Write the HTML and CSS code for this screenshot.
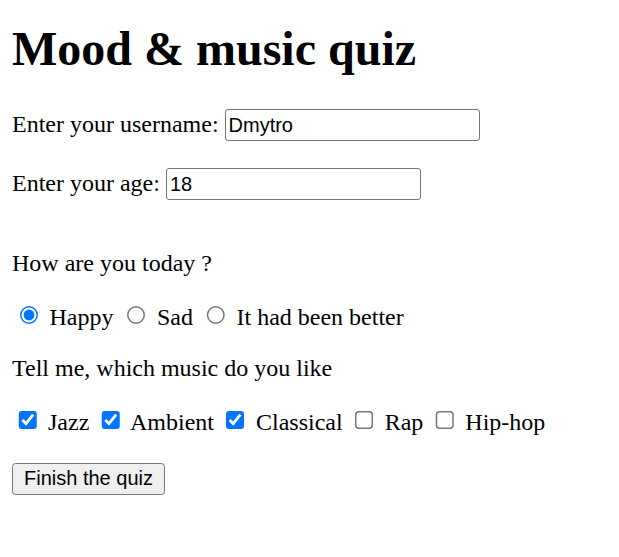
FILE: index.html
```html
<!DOCTYPE html>
<html>
<head>
<meta charset="utf-8">
<title>Mood &amp; music quiz</title>
<link rel="stylesheet" href="styles.css">
</head>
<body class="page">
<h1 class="title">Mood &amp; music quiz</h1>
<form class="quiz">
<p class="row">Enter your username: <input class="field" type="text" value="Dmytro"></p>
<p class="row">Enter your age: <input class="field" type="text" value="18"></p>
<p class="row gap">How are you today ?</p>
<p class="row"><input type="radio" name="mood" checked> Happy <input type="radio" name="mood"> Sad <input type="radio" name="mood"> It had been better</p>
<p class="row">Tell me, which music do you like</p>
<p class="row"><input type="checkbox" checked> Jazz <input type="checkbox" checked> Ambient <input type="checkbox" checked> Classical <input type="checkbox"> Rap <input type="checkbox"> Hip-hop</p>
<button class="submit" type="button">Finish the quiz</button>
</form>
</body>
</html>
```
FILE: styles.css
```css
html {
  zoom: 1.5;
}
.page {
  font-family: "Liberation Serif", "Times New Roman", serif;
  color: #000;
  background: #fff;
}
.title {
  margin-top: 5.8px;
}
.gap {
  margin-top: 32.5px;
}
.field {
  font-family: "Liberation Sans", Arial, sans-serif;
  font-size: 13.33px;
  width: 170px;
  height: 21.3px;
  box-sizing: border-box;
  margin: 1px 0;
  padding: 1px 2px;
  border: 1px solid #767676;
  border-radius: 2px;
  background: #fff;
  color: #000;
}
.submit {
  font-family: "Liberation Sans", Arial, sans-serif;
  margin-top: 1.5px;
}
```
